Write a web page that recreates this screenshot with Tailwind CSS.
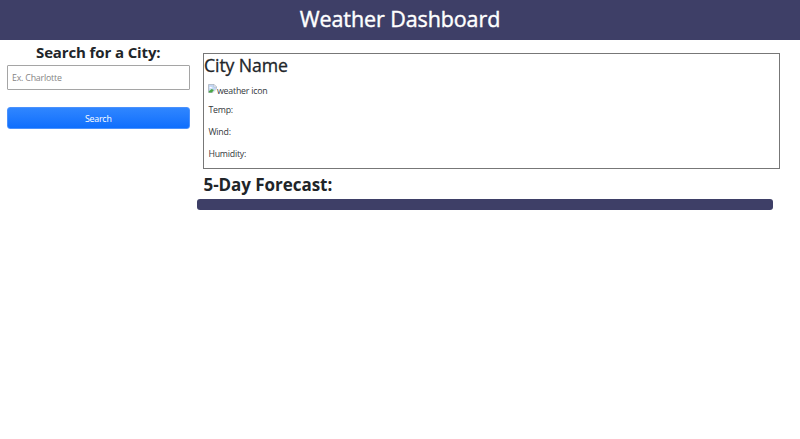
<!DOCTYPE html>
<html lang="en">
<head>
<meta charset="utf-8">
<title>Weather Dashboard</title>
<script src="https://cdn.jsdelivr.net/npm/@tailwindcss/browser@4"></script>
</head>
<body class="bg-white text-[#212529] font-['Open_Sans','Noto_Sans',sans-serif] overflow-hidden">
<header class="h-10 bg-[#3e3f67] flex justify-center">
  <h1 class="text-white text-[21.5px] leading-[38px] font-medium tracking-[-0.1px] whitespace-nowrap [-webkit-text-stroke:0.4px_currentColor]">Weather Dashboard</h1>
</header>
<main class="flex">
  <aside class="w-[197px] pl-[6.5px] pr-[7px] flex flex-col">
    <h2 class="text-center text-[15px] leading-[25px] font-bold tracking-[-0.12px] whitespace-nowrap">Search for a City:</h2>
    <input type="text" placeholder="Ex. Charlotte" class="h-[25px] w-full border border-[#a5a5a5] rounded-[1px] px-[4.5px] text-[8.8px] tracking-[-0.2px] placeholder:text-[#858585] outline-none">
    <button class="mt-[17px] h-[22px] w-full rounded-[3px] border border-[#4a91fd] bg-linear-to-b from-[#2f86ff] to-[#0d6efd] text-white text-[8.8px] leading-[20px] pt-px tracking-[-0.2px]">Search</button>
  </aside>
  <section class="flex-1">
    <div class="ml-[6px] mr-5 mt-[13px] h-[116px] border border-[#777777]">
      <h2 class="text-[17.7px] leading-[22px] font-medium tracking-[-0.1px] whitespace-nowrap [-webkit-text-stroke:0.3px_currentColor]">City Name</h2>
      <div class="pl-[4.4px] text-[8.8px] tracking-[-0.22px] text-[#34383c]">
        <div class="mt-[8px] h-[14px] flex items-start">
          <svg class="w-[9px] h-[9px]" viewBox="0 0 9 9" aria-hidden="true">
            <path d="M.5.5H6L8.5 3v2L5 8.5H.5z" fill="#c3d7f4" stroke="#a6adb8" stroke-width=".7"/>
            <path d="M1.5 3.7c0-1 1.3-1.2 1.7-.4 1-.2 1.4.5 1 1H1.5z" fill="#fff"/>
            <path d="M.8 8.4V7.2L3.7 5l2.2 1.1-2 2.3z" fill="#4aa843"/>
            <path d="M6 .5V3h2.5z" fill="#fff" stroke="#a6adb8" stroke-width=".5"/>
            <path d="M4.5 9 9 4.7" stroke="#fff" stroke-width=".8"/>
          </svg>
          <span class="leading-[15px] -ml-[0.4px]">weather icon</span>
        </div>
        <p class="mt-[5px] leading-[14px] h-[22px]">Temp:</p>
        <p class="leading-[14px] h-[22px]">Wind:</p>
        <p class="leading-[14px]">Humidity:</p>
      </div>
    </div>
    <h2 class="ml-[6.5px] mt-[5px] text-[17px] leading-[22px] font-bold tracking-[-0.05px] whitespace-nowrap">5-Day Forecast:</h2>
    <div class="-ml-[0.5px] mt-[3px] mr-[27px] h-[11px] rounded-[3px] bg-[#3e3f67]"></div>
  </section>
</main>
</body>
</html>
